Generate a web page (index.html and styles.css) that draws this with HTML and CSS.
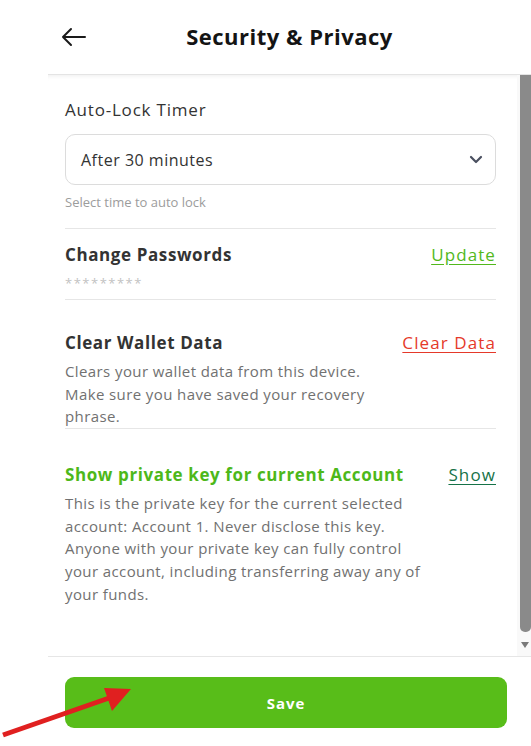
FILE: index.html
```html
<!DOCTYPE html>
<html lang="en">
<head>
<meta charset="utf-8">
<title>Security &amp; Privacy</title>
<link rel="stylesheet" href="styles.css">
</head>
<body>
<div class="page">
  <header class="topbar">
    <button class="back" aria-label="Back">
      <svg width="26" height="20" viewBox="0 0 26 20"><path d="M24 10H2M10 2L2 10l8 8" fill="none" stroke="#1a1a1a" stroke-width="2" stroke-linecap="round" stroke-linejoin="round"/></svg>
    </button>
    <h1 class="title">Security &amp; Privacy</h1>
  </header>

  <div class="panel">
    <div class="content">
      <section class="block">
        <label class="label">Auto-Lock Timer</label>
        <div class="select">
          <span>After 30 minutes</span>
          <svg width="14" height="9" viewBox="0 0 14 9"><path d="M2 2l5 5 5-5" fill="none" stroke="#4a5060" stroke-width="2.2" stroke-linecap="round" stroke-linejoin="round"/></svg>
        </div>
        <p class="hint">Select time to auto lock</p>
      </section>

      <section class="row row-pw">
        <div class="text">
          <h2 class="row-title">Change Passwords</h2>
          <p class="stars">*********</p>
        </div>
        <a class="action green">Update</a>
      </section>

      <section class="row row-clear">
        <div class="text">
          <h2 class="row-title">Clear Wallet Data</h2>
          <p class="desc">Clears your wallet data from this device. Make sure you have saved your recovery phrase.</p>
        </div>
        <a class="action red">Clear Data</a>
      </section>

      <section class="row row-key">
        <div class="text">
          <h2 class="row-title key-title">Show private key for current Account</h2>
          <p class="desc">This is the private key for the current selected account: Account 1. Never disclose this key. Anyone with your private key can fully control your account, including transferring away any of your funds.</p>
        </div>
        <a class="action dark">Show</a>
      </section>
    </div>
    <div class="scrollbar">
      <div class="thumb"></div>
      <div class="arrow"></div>
    </div>
  </div>

  <footer class="footer">
    <button class="save">Save</button>
  </footer>

  <svg class="pointer" width="140" height="60" viewBox="0 0 140 60">
    <path d="M3 55L112 17" stroke="#e02020" stroke-width="5" fill="none"/>
    <polygon points="104,8 131,9 112,31" fill="#e02020"/>
  </svg>
</div>
</body>
</html>
```

FILE: styles.css
```css
* { box-sizing: border-box; }
html, body { margin: 0; padding: 0; background: #fff; }
body { font-family: "Open Sans", "DejaVu Sans", sans-serif; color: #333; }

.page { position: relative; width: 531px; height: 746px; overflow: hidden; background: #fff; }

.topbar { height: 74px; display: flex; align-items: center; position: relative; }
.back { border: 0; background: none; padding: 0; margin-left: 61px; width: 26px; height: 20px; display: flex; cursor: pointer; }
.title { position: absolute; left: 0; right: 0; top: 0; height: 72px; margin: 0; display: flex; align-items: center; justify-content: center; padding-left: 48px; font-size: 22px; font-weight: 700; color: #141414; pointer-events: none; letter-spacing: 0.5px; }

.panel { margin-left: 48px; height: 583px; display: flex; border-top: 1px solid #e4e4e4; box-shadow: inset 0 4px 4px -3px rgba(0,0,0,0.07); border-bottom: 1px solid #e6e6e6; }
.content { flex: 1; padding: 0 21px 0 17px; }
.scrollbar { width: 14px; background: #f9f9f9; display: flex; flex-direction: column; align-items: flex-end; }
.thumb { width: 11px; height: 557px; background: #8a8a8a; border-radius: 0 0 5px 5px; }
.arrow { width: 0; height: 0; border-left: 4px solid transparent; border-right: 4px solid transparent; border-top: 6px solid #7a7a7a; margin: 10px 2px 0 0; }

.block { padding-top: 23px; padding-bottom: 16px; border-bottom: 1px solid #e6e6e6; }
.label { display: block; font-size: 17px; line-height: 24px; color: #333; letter-spacing: 0.8px; }
.select { margin-top: 12px; height: 51px; border: 1px solid #dcdcdc; border-radius: 10px; display: flex; align-items: center; justify-content: space-between; padding: 0 12px 0 15px; font-size: 16px; letter-spacing: 0.5px; color: #333; }
.hint { margin: 7px 0 0; font-size: 13px; line-height: 20px; color: #9c9c9c; letter-spacing: 0; }

.row { display: flex; justify-content: space-between; gap: 16px; border-bottom: 1px solid #e6e6e6; }
.text { flex: 1; min-width: 0; }
.row-title { margin: 0; font-size: 17px; line-height: 24px; font-weight: 700; color: #333; letter-spacing: 0.6px; }
.action { flex-shrink: 0; font-size: 17px; line-height: 24px; text-decoration: underline; text-underline-offset: 3px; cursor: pointer; letter-spacing: 1.1px; }
.green { color: #52b81c; }
.red { color: #e5392a; }
.dark { color: #167248; }

.row-pw { padding-top: 14px; padding-bottom: 6px; }
.stars { margin: 6px 0 0; font-size: 13px; line-height: 20px; color: #c2c2c2; letter-spacing: 1.5px; }

.row-clear { padding-top: 31px; padding-bottom: 0; }
.desc { margin: 5px 0 0; font-size: 15px; line-height: 22.6px; color: #717171; letter-spacing: 0.4px; }

.row-key { padding-top: 34px; border-bottom: 0; }
.row-key .desc { margin-top: 5px; line-height: 22.75px; }
.key-title { color: #4db81a; }

.footer { padding: 20px 24px 0 65px; }
.save { width: 442px; height: 51px; border: 0; border-radius: 9px; background: #58bd19; color: #fff; font-family: inherit; font-size: 15px; font-weight: 700; letter-spacing: 1px; cursor: pointer; }

.pointer { position: absolute; left: 0; top: 680px; }
```
